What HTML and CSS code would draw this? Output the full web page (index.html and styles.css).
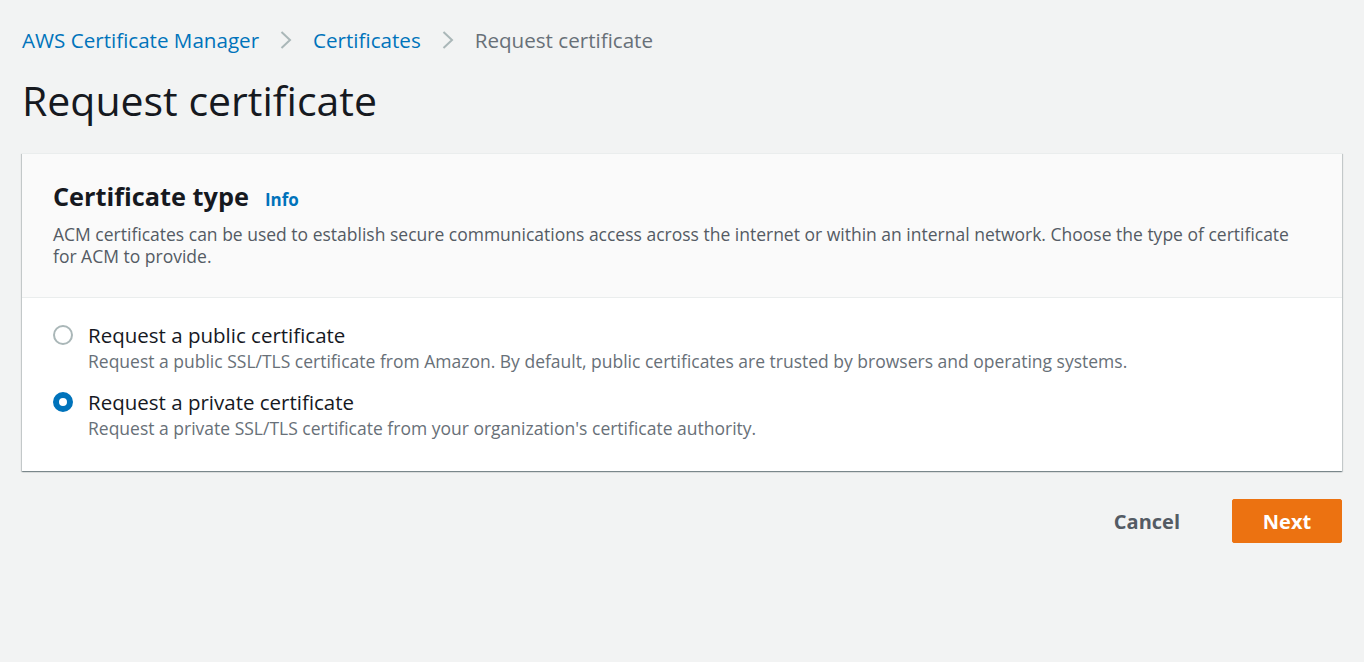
FILE: index.html
```html
<!DOCTYPE html>
<html>
<head>
<meta charset="utf-8">
<link rel="stylesheet" href="styles.css">
</head>
<body>
<div class="page">
  <nav class="crumbs">
    <a class="crumb-link">AWS Certificate Manager</a>
    <svg class="chev" viewBox="0 0 14 22" width="14" height="22"><path d="M2.5 3 L11 11 L2.5 19" fill="none" stroke="#aab7b8" stroke-width="2"/></svg>
    <a class="crumb-link">Certificates</a>
    <svg class="chev" viewBox="0 0 14 22" width="14" height="22"><path d="M2.5 3 L11 11 L2.5 19" fill="none" stroke="#aab7b8" stroke-width="2"/></svg>
    <span class="crumb-current">Request certificate</span>
  </nav>
  <h1 class="title">Request certificate</h1>
  <section class="card">
    <header class="card-head">
      <div class="head-row">
        <h2 class="card-title">Certificate type</h2>
        <a class="info">Info</a>
      </div>
      <p class="card-desc">ACM certificates can be used to establish secure communications access across the internet or within an internal network. Choose the type of certificate for ACM to provide.</p>
    </header>
    <div class="card-body">
      <div class="radio-row">
        <span class="radio"></span>
        <div class="radio-text">
          <div class="radio-label">Request a public certificate</div>
          <div class="radio-desc">Request a public SSL/TLS certificate from Amazon. By default, public certificates are trusted by browsers and operating systems.</div>
        </div>
      </div>
      <div class="radio-row">
        <span class="radio checked"></span>
        <div class="radio-text">
          <div class="radio-label">Request a private certificate</div>
          <div class="radio-desc">Request a private SSL/TLS certificate from your organization's certificate authority.</div>
        </div>
      </div>
    </div>
  </section>
  <div class="actions">
    <button class="btn-cancel">Cancel</button>
    <button class="btn-next">Next</button>
  </div>
</div>
</body>
</html>
```

FILE: styles.css
```css
html, body {
  margin: 0;
  padding: 0;
  background: #f2f3f3;
  font-family: "Open Sans", "Noto Sans", sans-serif;
  color: #16191f;
}
.page {
  padding: 26px 22px 0 22px;
}
.crumbs {
  display: flex;
  align-items: center;
  gap: 20px;
  height: 28px;
  font-size: 20.6px;
}
.crumb-link {
  color: #0073bb;
}
.crumb-current {
  color: #687078;
}
.chev {
  display: block;
}
.title {
  margin: 18px 0 0 0;
  font-size: 41px;
  font-weight: 400;
  line-height: 56px;
  color: #16191f;
}
.card {
  margin-top: 25px;
  background: #fff;
  box-shadow: 0 1px 1px 0 rgba(0,28,36,.3), 1px 1px 1px 0 rgba(0,28,36,.15), -1px 1px 1px 0 rgba(0,28,36,.15);
  border-top: 1px solid #eaeded;
}
.card-head {
  background: #fafafa;
  border-bottom: 1px solid #eaeded;
  padding: 24px 30px 30px 31px;
}
.head-row {
  display: flex;
  align-items: baseline;
  gap: 16px;
}
.card-title {
  margin: 0;
  font-size: 25.3px;
  font-weight: 700;
  line-height: 36px;
}
.info {
  color: #0073bb;
  font-weight: 700;
  font-size: 17px;
}
.card-desc {
  margin: 9px 0 0 0;
  font-size: 17.5px;
  line-height: 22px;
  color: #545b64;
}
.card-body {
  padding: 23px 31px 31px 31px;
  display: flex;
  flex-direction: column;
  gap: 15px;
}
.radio-row {
  display: flex;
  gap: 15px;
}
.radio {
  flex: none;
  box-sizing: border-box;
  width: 20px;
  height: 20px;
  border-radius: 50%;
  border: 2px solid #aab7b8;
  background: #fff;
  margin-top: 4px;
}
.radio.checked {
  border: 6px solid #0073bb;
}
.radio-label {
  font-size: 20.5px;
  line-height: 28px;
  color: #16191f;
}
.radio-desc {
  font-size: 17.5px;
  line-height: 24px;
  color: #687078;
}
.actions {
  display: flex;
  justify-content: flex-end;
  align-items: center;
  gap: 32px;
  margin-top: 28px;
}
.btn-cancel {
  background: none;
  border: none;
  font-family: inherit;
  font-size: 20px;
  font-weight: 700;
  color: #545b64;
  padding: 0 20px;
  height: 44px;
}
.btn-next {
  background: #ec7211;
  border: 1px solid #ec7211;
  border-radius: 2px;
  color: #fff;
  font-family: inherit;
  font-size: 20px;
  font-weight: 700;
  width: 110px;
  height: 44px;
}
```
